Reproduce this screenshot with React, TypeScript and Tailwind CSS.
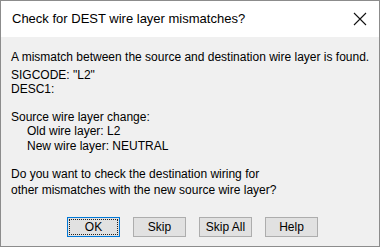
export default function App() {
  const buttons = ['OK', 'Skip', 'Skip All', 'Help'];

  return (
    <div className="w-[381px] h-[249px] bg-white" style={{ fontFamily: '"Liberation Sans", Arial, sans-serif' }}>
      <div className="w-[380px] h-[247px] border border-[#8c8c8c] flex flex-col">
        {/* title bar */}
        <div className="h-[36px] bg-white flex items-center justify-between pl-[11px] pr-[10px] shrink-0">
          <span className="text-[13px] text-black whitespace-nowrap">Check for DEST wire layer mismatches?</span>
          <svg width="14" height="14" viewBox="0 0 14 14" className="mr-[2px]">
            <path d="M1 1L13 13M13 1L1 13" stroke="#111" strokeWidth="1.1" fill="none" />
          </svg>
        </div>

        {/* body */}
        <div className="flex-1 bg-[#f0f0f0] pl-[10px] pt-[13px] text-[12px] leading-[14px] text-black whitespace-nowrap">
          <div className="mb-[4px]">A mismatch between the source and destination wire layer is found.</div>
          <div>SIGCODE: "L2"</div>
          <div>DESC1:</div>
          <div className="mt-[14px]">Source wire layer change:</div>
          <div className="pl-[16px]">Old wire layer: L2</div>
          <div className="pl-[16px] mt-[1px]">New wire layer: NEUTRAL</div>
          <div className="mt-[14px]">Do you want to check the destination wiring for</div>
          <div className="mt-[2px]">other mismatches with the new source wire layer?</div>

          <div className="flex gap-[13px] pl-[56px] mt-[20px]">
            {buttons.map((b, i) => (
              <div
                key={b}
                className={
                  i === 0
                    ? 'w-[53px] h-[20px] bg-[#e1e1e1] border border-[#0078d7] p-[1px]'
                    : 'w-[53px] h-[20px] bg-[#e1e1e1] border border-[#adadad] p-[1px]'
                }
              >
                <div
                  className={
                    i === 0
                      ? 'w-full h-full border border-dotted border-[#222] flex items-center justify-center text-[12px]'
                      : 'w-full h-full flex items-center justify-center text-[12px]'
                  }
                >
                  {b}
                </div>
              </div>
            ))}
          </div>
        </div>
      </div>
    </div>
  );
}
